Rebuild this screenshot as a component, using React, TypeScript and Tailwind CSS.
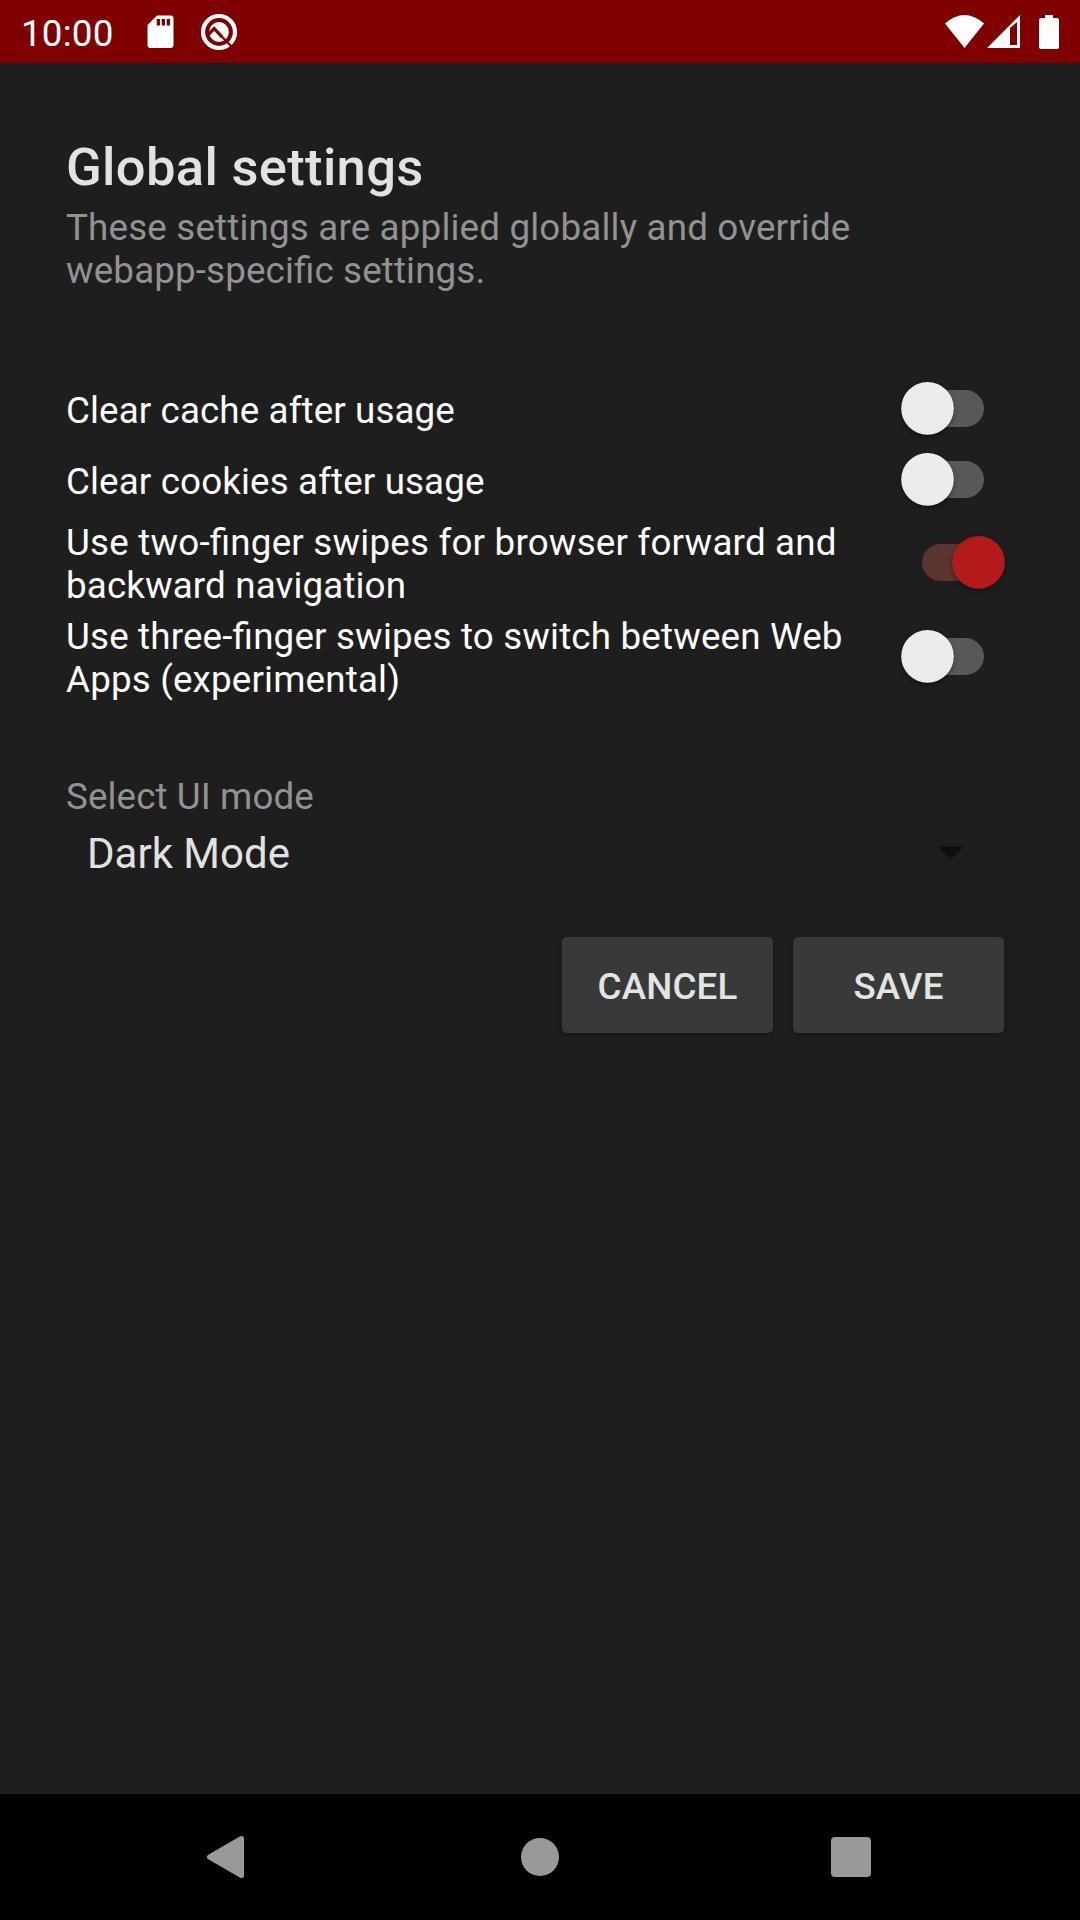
const rows = [
  { lines: [{ text: 'Clear cache after usage', cls: 'tracking-[0.11px]' }], on: false, row: 'h-[71px]' },
  { lines: [{ text: 'Clear cookies after usage', cls: 'tracking-[0.13px]' }], on: false, row: 'h-[71px]' },
  {
    lines: [
      { text: 'Use two-finger swipes for browser forward and', cls: 'tracking-[0.2px]' },
      { text: 'backward navigation', cls: 'tracking-[0.13px]' },
    ],
    on: true,
    row: 'h-[94px]',
  },
  {
    lines: [
      { text: 'Use three-finger swipes to switch between Web', cls: 'tracking-[0.17px]' },
      { text: 'Apps (experimental)', cls: 'tracking-[0.17px]' },
    ],
    on: false,
    row: 'h-[94px]',
  },
];

function Toggle({ on }: { on: boolean }) {
  return (
    <svg className={on ? 'h-[71px] w-[110px] overflow-visible' : 'mr-[21px] h-[71px] w-[110px] overflow-visible'} viewBox="0 0 110 71">
      <rect x={on ? 18 : 27} y="17" width="74" height="37" rx="18.5" fill={on ? '#5b352f' : '#585858'} />
      <circle
        className="drop-shadow-[0_2px_2px_rgba(0,0,0,0.4)]"
        cx={on ? 74.5 : 44.5}
        cy="35.4"
        r="26.3"
        fill={on ? '#b31b1a' : '#ececec'}
      />
    </svg>
  );
}

function SdCard() {
  return (
    <svg className="ml-[35px] h-[34px] w-[27px]" viewBox="0 0 27 34" fill="#fff" fillRule="evenodd">
      <path d="M10 .5H23.5Q26.5 .5 26.5 3.500V30Q26.500 33 23.500 33H3.500Q.5 33 .5 30V10ZM9.700 4V10.500H13V4ZM14.700 4V10.500H18V4ZM19.700 4V10.500H23V4Z" />
    </svg>
  );
}

function DebugBadge() {
  return (
    <svg className="ml-[26px] h-[38px] w-[38px]" viewBox="0 0 38 38" fill="none">
      <circle cx="19" cy="19" r="16" stroke="#fff" strokeWidth="4.200" />
      <circle cx="19" cy="19" r="9.900" fill="#fff" />
      <path d="M8 21.800L14.200 15.600L22 23.800" stroke="#7f0000" strokeWidth="3.200" />
      <path d="M21 22.800L32 34" stroke="#7f0000" strokeWidth="2.300" />
    </svg>
  );
}

export default function App() {
  return (
    <div className="flex h-[1920px] w-[1080px] flex-col bg-[#1e1e1e] font-['Roboto',sans-serif] text-white [font-feature-settings:'liga'_1]">
      <header className="flex h-[63px] items-center bg-[#7f0000] pl-[21px] pr-[20px]">
        <span className="mt-[3px] w-[91px] text-[36.75px] leading-[43px] tracking-[0.2px]">10:00</span>
        <SdCard />
        <DebugBadge />
        <svg className="ml-auto h-[34px] w-[116px]" viewBox="944 14 116 34" fill="#fff">
          <path d="M945 22.500Q964.500 5.500 984 22.500L964.500 47Z" />
          <path fillRule="evenodd" d="M987 47L1020 14V47ZM1010 27V44H1017V21Z" />
          <path d="M1045 14H1053V17H1057Q1059 17 1059 19V46Q1059 48 1057 48H1041Q1039 48 1039 46V19Q1039 17 1041 17H1045Z" />
        </svg>
      </header>
      <main className="flex flex-1 flex-col px-[66px] pt-[73px]">
        <h1 className="text-[52.5px] leading-[62px] font-medium tracking-[0.33px] text-[#e2e2e2]">Global settings</h1>
        <p className="mt-[8px] text-[36.75px] leading-[43px] tracking-[0.17px] text-[#929292]">
          These settings are applied globally and override
          <br />
          <span className="tracking-[0.13px]">webapp-specific settings.</span>
        </p>
        <section className="mt-[81px]">
          {rows.map((r) => (
            <div key={r.lines[0].text} className={'flex items-center justify-between text-[36.75px] leading-[43px] ' + r.row}>
              <div className="pt-[4px] whitespace-nowrap">
                {r.lines.map((l) => (
                  <div key={l.text} className={l.cls}>{l.text}</div>
                ))}
              </div>
              <Toggle on={r.on} />
            </div>
          ))}
        </section>
        <label className="mt-[72px] text-[36.75px] leading-[43px] tracking-[0.1px] text-[#929292]">Select UI mode</label>
        <div className="mt-[11px] flex h-[49px] items-center justify-between pr-[50px] pl-[21px]">
          <span className="text-[42px] leading-[49px] text-[#e2e2e2]">Dark Mode</span>
          <svg className="mb-[2px] h-[14px] w-[26px]" viewBox="0 0 26 14">
            <path d="M0 .5H26L13 13.500Z" fill="#0f0f0f" />
          </svg>
        </div>
        <div className="mt-[59px] flex justify-end gap-[20px] pr-[10px] text-[36.75px] font-medium text-[#e4e4e4]">
          <button className="h-[96px] w-[211px] rounded-[5px] bg-[#383a39] pt-[3px] tracking-[0.12px] shadow-[0_3px_5px_rgba(0,0,0,0.2)]">CANCEL</button>
          <button className="h-[96px] w-[211px] rounded-[5px] bg-[#383a39] pt-[3px] tracking-[0.15px] shadow-[0_3px_5px_rgba(0,0,0,0.2)]">SAVE</button>
        </div>
      </main>
      <nav className="flex h-[126px] items-center justify-between bg-black pr-[209px] pl-[206px]">
        <svg className="h-[44px] w-[40px]" viewBox="0 0 40 44" fill="#999" stroke="#999" strokeWidth="5" strokeLinejoin="round">
          <path d="M3.500 22L35.500 3.500V40.500Z" />
        </svg>
        <div className="ml-[3px] size-[38px] rounded-full bg-[#999]" />
        <div className="size-[40px] rounded-[4px] bg-[#999]" />
      </nav>
    </div>
  );
}
